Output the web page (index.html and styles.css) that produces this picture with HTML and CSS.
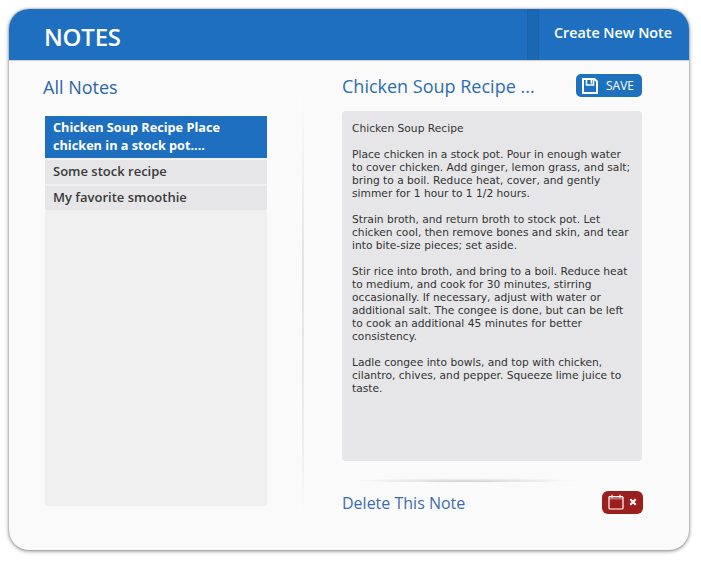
FILE: index.html
```html
<!DOCTYPE html>
<html lang="en">
<head>
<meta charset="utf-8">
<title>Notes</title>
<link rel="stylesheet" href="styles.css">
</head>
<body>
<div class="card">
  <header class="top">
    <h1 class="brand">NOTES</h1>
    <div class="sep"></div>
    <a class="create">Create New Note</a>
  </header>
  <main class="content">
    <section class="left">
      <h2 class="all">All Notes</h2>
      <ul class="list">
        <li class="item active">Chicken Soup Recipe Place chicken in a stock pot....</li>
        <li class="item">Some stock recipe</li>
        <li class="item">My favorite smoothie</li>
      </ul>
    </section>
    <div class="divider"></div>
    <section class="right">
      <div class="title-row">
        <h2 class="title">Chicken Soup Recipe ...</h2>
        <button class="save">
          <svg class="save-ico" viewBox="0 0 16 16" width="16" height="16"><path d="M1 1h11.5L15 3.5V15H1z" fill="none" stroke="#fff" stroke-width="2"/><path d="M4.5 1.5v5.5h7v-5.5" fill="none" stroke="#fff" stroke-width="1.6"/><rect x="8.6" y="2" width="1.6" height="3.6" fill="#fff"/></svg>
          <span>SAVE</span>
        </button>
      </div>
      <div class="body">
        <p>Chicken Soup Recipe</p>
        <p>Place chicken in a stock pot. Pour in enough water<br>to cover chicken. Add ginger, lemon grass, and salt;<br>bring to a boil. Reduce heat, cover, and gently<br>simmer for 1 hour to 1 1/2 hours.</p>
        <p>Strain broth, and return broth to stock pot. Let<br>chicken cool, then remove bones and skin, and tear<br>into bite-size pieces; set aside.</p>
        <p>Stir rice into broth, and bring to a boil. Reduce heat<br>to medium, and cook for 30 minutes, stirring<br>occasionally. If necessary, adjust with water or<br>additional salt. The congee is done, but can be left<br>to cook an additional 45 minutes for better<br>consistency.</p>
        <p>Ladle congee into bowls, and top with chicken,<br>cilantro, chives, and pepper. Squeeze lime juice to<br>taste.</p>
      </div>
      <div class="curve"></div>
      <div class="foot">
        <a class="delete">Delete This Note</a>
        <button class="trash">
          <svg viewBox="0 0 16 16" width="16" height="16"><rect x="1" y="2.5" width="14" height="12.5" rx="1" fill="none" stroke="#fff" stroke-width="1.2"/><rect x="1" y="2.5" width="14" height="3" fill="#fff" fill-opacity=".35"/><path d="M4 .8v3M12 .8v3" stroke="#fff" stroke-width="1.2"/></svg>
          <svg viewBox="0 0 8 8" width="8" height="8"><path d="M1.3 1.3l5.4 5.4M6.7 1.3l-5.4 5.4" stroke="#fff" stroke-width="2"/></svg>
        </button>
      </div>
    </section>
  </main>
</div>
</body>
</html>
```
FILE: styles.css
```css
* { box-sizing: border-box; }
html, body { margin: 0; padding: 0; background: #fff; }
body { width: 701px; height: 562px; padding: 9px 0 0 9px; font-family: "Open Sans", "Liberation Sans", sans-serif; overflow: hidden; }
.card { width: 680px; height: 541px; background: #fafafa; border-radius: 20px; overflow: hidden; box-shadow: 0 1px 4px rgba(0,0,0,.45), 0 0 2px rgba(0,0,0,.3); display: flex; flex-direction: column; }
.top { height: 51px; flex: none; background: #1e6fbf; display: flex; align-items: stretch; box-shadow: 0 1px 1px rgba(0,0,0,.15); }
.brand { margin: 0 0 0 35px; width: 483px; font-size: 24px; font-weight: 600; line-height: 56px; color: #fff; letter-spacing: -.2px; }
.sep { width: 12px; background: #1c67b1; border-left: 1px solid #1a62a9; border-right: 1px solid #1a62a9; }
.create { margin-left: 15px; font-size: 14.3px; font-weight: 600; line-height: 47px; color: #fff; white-space: nowrap; }
.content { flex: 1; display: flex; min-height: 0; }
.left { width: 258px; margin-left: 35px; flex: none; padding-top: 14px; display: flex; flex-direction: column; }
.all { margin: 0 0 15px -1px; font-size: 18px; font-weight: 400; line-height: 27px; color: #2a66ae; }
.list { list-style: none; margin: 0 0 0 1px; padding: 0; width: 222px; height: 390px; background: #f0f0f0; display: flex; flex-direction: column; gap: 2px; }
.item { background: #e6e6e8; color: #3a3a3a; font-size: 13px; font-weight: 600; line-height: 18px; padding: 2px 8px 3px 8px; height: 24px; }
.item.active { background: #1e6fbf; color: #fff; font-size: 12.7px; font-weight: 700; height: 42px; padding-right: 30px; }
.divider { width: 2px; height: 442px; margin-top: 22px; flex: none; background: linear-gradient(to bottom, rgba(0,0,0,0), rgba(0,0,0,.09) 40%, rgba(0,0,0,.06) 85%, rgba(0,0,0,0)); border-radius: 50%; }
.right { width: 301px; margin-left: 38px; flex: none; display: flex; flex-direction: column; }
.title-row { display: flex; justify-content: space-between; align-items: flex-start; width: 300px; height: 51px; padding-top: 14px; }
.title { margin: -1px 0 0; font-size: 18px; font-weight: 400; line-height: 27px; color: #2a6fb0; white-space: nowrap; }
.save { width: 66px; height: 23px; border: 0; padding: 0 0 0 6px; border-radius: 5px; background: #1e72bd; color: #fff; display: flex; align-items: center; gap: 8px; font-family: inherit; font-size: 12px; }
.save-ico { flex: none; }
.body { width: 300px; height: 350px; background: #e6e6e8; border-radius: 4px; padding: 11px 0 0 10px; font-family: "DejaVu Sans", sans-serif; font-size: 10.68px; line-height: 13px; color: #333; }
.body p { margin: 0 0 13px; white-space: nowrap; }
.curve { width: 240px; height: 4px; margin: 17px 0 0 4px; background: radial-gradient(ellipse at 50% 100%, rgba(0,0,0,.18), rgba(0,0,0,0) 72%); border-radius: 0 0 50% 50%; }
.foot { width: 301px; display: flex; justify-content: space-between; align-items: center; margin-top: 7px; }
.delete { font-size: 16px; line-height: 26px; color: #3a6cae; position: relative; top: 1px; }
.trash { width: 41px; height: 23px; border: 0; padding: 0 0 0 6px; background: #9c1f1f; border-radius: 6px; display: flex; align-items: center; gap: 5px; }
```
